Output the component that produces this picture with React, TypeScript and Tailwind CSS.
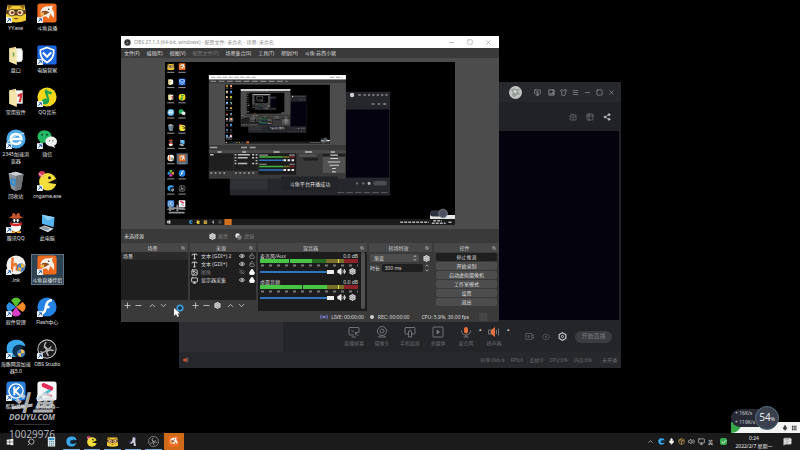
import type { ReactNode } from "react";
import { clsx } from "clsx";
import {
  Check, ChevronDown, ChevronUp, Eye, EyeOff, Image, Lock, Menu, Mic, Minus, Monitor, MonitorPlay,
  Plus, Search, Settings, Share2, Shirt, Square, Table2, Type, Unlock,
  Volume2, X, MessageSquareText, Package, Grip, CopyMinus,
} from "lucide-react";

/* Icon artwork, all on a 24x24 grid */
const art: Record<string, ReactNode> = {
  yy: (
    <>
      <path d="M2 2L8 3H16L22 2L24 12V21Q12 26 0 21V12Z" fill="#f4cd35" />
      <path d="M2 2L8 3L3 8ZM22 2L16 3L21 8Z" fill="#9a6a1c" />
      <path d="M0 9Q12 6 24 9V13Q12 17 0 13Z" fill="#5a3a18" />
      <circle cx="7" cy="11.5" r="4" fill="#f7e6b8" stroke="#5a3a18" />
      <circle cx="17" cy="11.5" r="4" fill="#f7e6b8" stroke="#5a3a18" />
      <circle cx="7.5" cy="11.5" r="1.800" fill="#7a3a22" />
      <circle cx="16.5" cy="11.5" r="1.800" fill="#7a3a22" />
      <path d="M9 18Q12 21 15 18Z" fill="#6b4218" />
    </>
  ),
  douyu: (
    <>
      <rect x="0.5" y="0.5" width="23" height="23" rx="3" fill="#ee6a1f" />
      <path d="M4 11Q6 3 15 4L19 3L18 7Q22 12 20 18L16 13L14 19L11 16L5 17L9 12Z" fill="#f6efe6" />
      <path d="M6 10Q11 8 15 11L10 14L6 15Z" fill="#8d4a1e" />
      <path d="M4 12L9 11L8 15L4 15Z" fill="#f7b34d" />
      <circle cx="14" cy="7.5" r="1" fill="#333" />
    </>
  ),
  folder: (
    <>
      <path d="M4 4L12 2V22L4 20Z" fill="#e9d58e" />
      <path d="M11 4H19V20H11Z" fill="#f7f6ee" />
      <path d="M4 4L13 7V24L4 20Z" fill="#f4e6aa" />
      <path d="M14 9L20 6V18L14 21Z" fill="#fff" />
      <rect x="8" y="9" width="2" height="5" fill="#7aa36b" />
    </>
  ),
  folderRed: (
    <>
      <path d="M4 4L12 2V22L4 20Z" fill="#e9d58e" />
      <path d="M11 4H20V20H11Z" fill="#f8f8f5" />
      <path d="M4 4L13 7V24L4 20Z" fill="#f4e6aa" />
      <path d="M14 9L20 7L18 18H15L17 11L14 12Z" fill="#d22f35" />
    </>
  ),
  guard: (
    <>
      <rect x="0.5" y="0.5" width="23" height="23" rx="2" fill="#1c66df" />
      <path d="M12 3L20 6Q21 16 12 21Q3 16 4 6Z" fill="none" stroke="#fff" strokeWidth="2" />
      <path d="M7 9L12 14L17 9" fill="none" stroke="#fff" strokeWidth="2.6" />
    </>
  ),
  qqmusic: (
    <>
      <circle cx="12" cy="12" r="11.5" fill="#f6d719" />
      <path d="M11 2Q12 5 18 6L17 9L13 8L15 16Q14 21 9 21Q5 20 6 16Q8 13 12 14L9 5Z" fill="#22a455" />
    </>
  ),
  ie: (
    <>
      <circle cx="12" cy="12" r="11.5" fill="#4aa9e6" />
      <path d="M5 12H18.5Q18 6 12 6Q6 6 5.500 12Q6 18 12 18Q16 18 18 15" fill="none" stroke="#fff" strokeWidth="3" />
      <path d="M1 17Q4 9 22 5" fill="none" stroke="#d6efff" strokeWidth="1.200" />
    </>
  ),
  wechat: (
    <>
      <ellipse cx="9" cy="9" rx="8.500" ry="7.500" fill="#25b764" />
      <path d="M4 14L3 19L8 16Z" fill="#25b764" />
      <ellipse cx="17" cy="15" rx="7" ry="6" fill="#eef0ee" />
      <path d="M20 19L22 23L17 20Z" fill="#eef0ee" />
      <circle cx="6" cy="7" r="1.200" fill="#0a4a25" />
      <circle cx="12" cy="7" r="1.200" fill="#0a4a25" />
      <circle cx="15" cy="14" r="0.900" fill="#777" />
      <circle cx="19" cy="14" r="0.900" fill="#777" />
    </>
  ),
  bin: (
    <>
      <path d="M3 3L12 1L21 4L18 22L11 24L6 21Z" fill="#8a9095" />
      <path d="M3 3L12 1L21 4L12 6Z" fill="#c9ced1" />
      <path d="M12 6L21 4L18 22L11 24Z" fill="#6e7478" />
      <path d="M7 10L11 11L10 17L6 15Z" fill="none" stroke="#2c8ed6" strokeWidth="2" />
    </>
  ),
  pac: (
    <>
      <circle cx="6" cy="4" r="4" fill="#d33a63" />
      <circle cx="13" cy="13" r="10.500" fill="#f4de3b" />
      <path d="M13 14L24 9V16Z" fill="#161206" />
      <circle cx="15" cy="8" r="1.800" fill="#222" />
      <path d="M2 3L8 7" stroke="#f4a1ba" strokeWidth="1.500" />
    </>
  ),
  qq: (
    <>
      <ellipse cx="12" cy="14" rx="7" ry="8" fill="#17181c" />
      <ellipse cx="12" cy="17" rx="6" ry="6" fill="#fff" />
      <circle cx="12" cy="7" r="5" fill="#17181c" />
      <path d="M3 5Q12 9 21 5L17 4L16 0H14L12 3L10 0H8L7 4Z" fill="#c4542c" />
      <path d="M5 11Q12 15 19 11V14Q12 18 5 14Z" fill="#d9262c" />
      <ellipse cx="10" cy="9" rx="1.300" ry="1.700" fill="#fff" />
      <ellipse cx="14" cy="9" rx="1.300" ry="1.700" fill="#fff" />
      <path d="M6 23H11M13 23H18" stroke="#f3a11e" strokeWidth="2" />
    </>
  ),
  pc: (
    <>
      <path d="M6 2L21 5L20 17L6 13Z" fill="#54b5ee" />
      <path d="M6 2L21 5L13 9Z" fill="#8dd0f6" />
      <path d="M2 18L9 15L20 19L13 23Z" fill="#cfd8de" />
      <path d="M4 18L9 16L16 19L12 21Z" fill="#8d9aa3" />
    </>
  ),
  link: (
    <>
      <circle cx="12" cy="12" r="11.500" fill="#f3f1ee" />
      <path d="M8 3L7 20M7 14Q12 8 13 13V19" fill="none" stroke="#e9742a" strokeWidth="3" />
      <circle cx="18" cy="15" r="5" fill="#4a7fc1" />
      <path d="M18 10L22 12V15H18ZM14 15H18V20L15 18Z" fill="#f0b840" />
    </>
  ),
  clover: (
    <>
      <path d="M12 12L6 4Q12 -3 18 4Z" fill="#57c12c" />
      <path d="M12 12L20 6Q27 12 20 18Z" fill="#f08b25" />
      <path d="M12 12L18 20Q12 27 6 20Z" fill="#d93ec5" />
      <path d="M12 12L4 18Q-3 12 4 6Z" fill="#2d8fe2" />
    </>
  ),
  flash: (
    <>
      <circle cx="12" cy="12" r="11.500" fill="#2583e4" />
      <path d="M18 4Q12 4 11 11Q10 18 6 20M9 12H15" fill="none" stroke="#fff" strokeWidth="3" />
    </>
  ),
  dolphin: (
    <>
      <path d="M1 14Q-1 3 11 1Q22 0 23 9L17 7Q9 7 8 14Q8 19 13 22Q3 22 1 14Z" fill="#38a8ea" />
      <path d="M8 14Q9 7 17 7L22 11Q15 10 13 15Q12 19 15 22Q8 20 8 14Z" fill="#0d3457" />
      <circle cx="18" cy="17" r="5" fill="#3e78bd" />
      <path d="M18 12L22 14V17H18ZM14 17H18V22L15 20Z" fill="#f1bf49" />
    </>
  ),
  dolphinSmall: (
    <>
      <path d="M1 14Q-1 3 11 1Q22 0 23 9L17 8Q9 8 9 14Q10 18 16 17L23 15Q19 24 10 23Q2 21 1 14Z" fill="#38a8ea" />
      <path d="M9 14Q9 8 17 8L22 10Q14 10 13 16Q9 17 9 14Z" fill="#0d3457" />
    </>
  ),
  obs: (
    <>
      <circle cx="12" cy="12" r="11" fill="#1b1b1d" stroke="#b8b8b8" strokeWidth="1.300" />
      <path d="M11 4Q7 8 11 12Q15 13 17 9M20 14Q15 12 12 15Q11 18 14 20M4 15Q8 18 12 13Q12 10 8 9" fill="none" stroke="#b8b8b8" strokeWidth="1.600" />
    </>
  ),
  kugou: (
    <>
      <rect x="0.500" y="0.500" width="23" height="23" rx="4" fill="#2b7fdc" />
      <circle cx="12" cy="12" r="8.500" fill="none" stroke="#fff" strokeWidth="1.600" />
      <path d="M10 7V17M16 7L11 12L16 17" fill="none" stroke="#fff" strokeWidth="2.400" />
    </>
  ),
  clip: (
    <>
      <rect x="0.500" y="0.500" width="23" height="23" rx="3" fill="#f7f7f8" />
      <path d="M8 5L17 9" stroke="#e32b55" strokeWidth="5" strokeLinecap="round" />
      <path d="M16 11L8 16" stroke="#49b7c9" strokeWidth="3" />
      <path d="M12 16L18 18" stroke="#e32b55" strokeWidth="2.500" />
    </>
  ),
  calc: (
    <>
      <rect x="4" y="2" width="16" height="21" fill="#dfe6ea" />
      <rect x="6" y="4" width="12" height="5" fill="#2f8fc4" />
      <path d="M7 12H17M7 16H17M7 20H17" stroke="#3a7690" strokeWidth="2" strokeDasharray="2.500 1.500" />
    </>
  ),
  figure: (
    <>
      <path d="M13 2L19 4L18 13L20 21L15 22L14 14L9 17L5 16L11 11Z" fill="#cfcbd8" />
      <path d="M3 12L9 10L8 15ZM15 1L20 1L19 7Z" fill="#342e63" />
    </>
  ),
  windows: <path d="M2 5L11 3.500V11.500H2ZM12.500 3.300L22 2V11.500H12.500ZM2 13H11V20.500L2 19.300ZM12.500 13H22V22L12.500 20.700Z" fill="#f1f1f1" />,
};

const shortcutMark = (
  <>
    <rect x="0" y="17" width="7" height="7" fill="#eef3f8" />
    <path d="M1.500 22.500L5 19M2.500 19H5.200V21.700" fill="none" stroke="#2b5fa8" strokeWidth="1.200" />
  </>
);

type DesktopItem = { icon: string; label: string; shortcut?: boolean; selected?: boolean };

const desktopItems: DesktopItem[] = [
  { icon: "yy", label: "YY.exe", shortcut: true },
  { icon: "douyu", label: "斗鱼直播", shortcut: true },
  { icon: "folder", label: "盘口" },
  { icon: "guard", label: "电脑管家", shortcut: true },
  { icon: "folderRed", label: "常用软件" },
  { icon: "qqmusic", label: "QQ音乐", shortcut: true },
  { icon: "ie", label: "2345加速浏\n览器", shortcut: true },
  { icon: "wechat", label: "微信", shortcut: true },
  { icon: "bin", label: "回收站" },
  { icon: "pac", label: "cngame.exe", shortcut: true },
  { icon: "qq", label: "腾讯QQ", shortcut: true },
  { icon: "pc", label: "此电脑" },
  { icon: "link", label: ".lnk", shortcut: true },
  { icon: "douyu", label: "斗鱼直播伴侣", shortcut: true, selected: true },
  { icon: "clover", label: "软件管理", shortcut: true },
  { icon: "flash", label: "Flash中心", shortcut: true },
  { icon: "dolphin", label: "海豚网游加速\n器5.0", shortcut: true },
  { icon: "obs", label: "OBS Studio", shortcut: true },
  { icon: "kugou", label: "酷狗音乐", shortcut: true },
  { icon: "clip", label: "必剪直播…", shortcut: true },
];

const taskbarApps = ["dolphinSmall", "pac", "yy", "figure", "obs"];

function Art({ name, className, shortcut }: { name: string; className?: string; shortcut?: boolean }) {
  return (
    <svg viewBox="0 0 24 24" className={className} aria-hidden="true">
      {art[name]}
      {shortcut && shortcutMark}
    </svg>
  );
}

/* Captured desktop inside the OBS preview: it contains itself, down to `depth` levels */
function CapturedScreen({ depth }: { depth: number }) {
  return (
    <>
      <rect width="800" height="450" fill="#000" />
      {desktopItems.map((item, i) => {
        const x = i % 2 === 0 ? 6 : 37;
        const y = 3 + Math.floor(i / 2) * 42;
        return (
          <g key={i}>
            {item.selected && <rect x={x - 5} y={y - 3} width="31" height="30" fill="#53677a" />}
            <svg x={x} y={y} width="20" height="20" viewBox="0 0 24 24">
              {art[item.icon]}
            </svg>
            <rect x={x} y={y + 24} width="20" height="3" fill="#8c8c8c" />
          </g>
        );
      })}
      <path d="M10 403H54M14 394V412M34 394V412" stroke="#8b8f94" strokeWidth="5" />
      <rect x="10" y="413" width="44" height="5" fill="#8b8f94" />

      {/* Companion window */}
      <rect x="179" y="82" width="442" height="286" fill="#26272c" />
      <rect x="283" y="131" width="336" height="188" fill="#03020e" />
      <rect x="179" y="320" width="104" height="32" fill="#303136" />
      <circle cx="516" cy="91" r="6" fill="#cfcfcf" />
      <path d="M533 91H540M548 91H554M560 91H566M572 91H578M584 91H590M596 91H602M608 91H614M570 116H578M587 116H593M602 116H610" stroke="#8c8c90" strokeWidth="4" />
      <path d="M476 360H618" stroke="#55565b" strokeWidth="3" strokeDasharray="18 6" />
      <rect x="575" y="328" width="37" height="13" rx="6" fill="#4b4c52" />
      <circle cx="563" cy="335" r="4" fill="#bbb" />
      <circle cx="547" cy="335" r="3" fill="#707176" />
      <circle cx="530" cy="335" r="3" fill="#707176" />

      {/* OBS window */}
      <rect x="121" y="36" width="378" height="286" fill="#393939" />
      <rect x="121" y="36" width="378" height="12" fill="#fff" />
      <path d="M127 42H250M455 42H490" stroke="#a5a5a5" strokeWidth="3" strokeDasharray="12 4" />
      <path d="M125 53H338" stroke="#9a9a9a" strokeWidth="3" strokeDasharray="16 7" />
      <rect x="121" y="58" width="378" height="171" fill="#4c4c4c" />
      {depth > 0 ? (
        <svg x="165" y="62" width="290" height="163" viewBox="0 0 800 450">
          <CapturedScreen depth={depth - 1} />
        </svg>
      ) : (
        <rect x="165" y="62" width="290" height="163" fill="#0a0a0a" />
      )}
      <path d="M124 236H144M210 236H226M234 236H250" stroke="#a5a5a5" strokeWidth="4" />
      <rect x="121" y="243" width="378" height="9" fill="#4a4a4a" />
      <path d="M145 248H156M213 248H224M300 248H316M386 248H406M457 248H469" stroke="#bbb" strokeWidth="4" />
      <rect x="121" y="252" width="67" height="48" fill="#1f1f1f" />
      <rect x="190" y="252" width="66" height="48" fill="#1f1f1f" />
      <rect x="258" y="252" width="104" height="59" fill="#1b1b1b" />
      <path d="M124 256H134M192 256H197M201 256H234M192 264H197M201 264H228M192 272H197M192 280H197M201 280H227M240 256H246M250 256H255M240 264H246M250 264H255M250 272H255M240 280H246M250 280H255" stroke="#bcbcbc" strokeWidth="4" />
      <path d="M125 306H166M193 306H246" stroke="#a5a5a5" strokeWidth="4" strokeDasharray="5 7" />
      <path d="M260 257H284M260 282H280M343 257H358M343 282H358" stroke="#999" strokeWidth="3" />
      <path d="M260 262H325M260 288H327" stroke="#41b63c" strokeWidth="4" />
      <path d="M325 262H344M327 288H344" stroke="#77712c" strokeWidth="4" />
      <path d="M344 262H358M344 288H358" stroke="#7e2328" strokeWidth="4" />
      <path d="M260 271H327M260 298H327" stroke="#2f72c4" strokeWidth="4" />
      <path d="M327 271H357M327 298H357" stroke="#ececec" strokeWidth="6" strokeDasharray="7 4" />
      <rect x="370" y="254" width="48" height="8" fill="#505050" />
      <rect x="382" y="264" width="40" height="8" fill="#202020" />
      <rect x="435" y="253" width="62" height="53" fill="#525252" />
      <rect x="435" y="253" width="62" height="8" fill="#1f1f1f" />
      <path d="M456 257H477M456 266H477M449 276H483M454 285H480M461 294H471M461 303H471" stroke="#d0d0d0" strokeWidth="3" />

      {/* Broadcast notice */}
      <rect x="320" y="316" width="156" height="38" rx="2" fill="#232428" />
      <text x="344" y="342" fill="#e2e2e2" fontSize="14" fontFamily="'Noto Sans CJK SC', sans-serif">
        斗鱼平台开播成功
      </text>

      {/* Taskbar and floating widgets */}
      <rect y="433" width="800" height="17" fill="#1b1b1c" />
      <rect x="164" y="433" width="20" height="17" fill="#d4701d" />
      {taskbarApps.map((name, i) => (
        <svg key={name} x={66 + i * 20} y="436" width="11" height="11" viewBox="0 0 24 24">
          {art[name]}
        </svg>
      ))}
      <svg x="5" y="436" width="11" height="11" viewBox="0 0 24 24">{art.windows}</svg>
      <path d="M649 442H728M740 438H764M736 445H774M782 442H792" stroke="#b5b5b5" strokeWidth="4" strokeDasharray="8 3" />
      <rect x="731" y="422" width="69" height="11" fill="#e6e6e6" />
      <rect x="731" y="409" width="44" height="17" rx="8" fill="#2e323e" />
      <circle cx="767" cy="418" r="12" fill="#4b5060" stroke="#8a919e" strokeWidth="2" />
    </>
  );
}

function DesktopIcons() {
  return (
    <main className="grid w-[63px] grid-cols-2">
      {desktopItems.map((item) => (
        <button
          key={item.label}
          className="flex h-[42px] flex-col items-center pt-[3px] text-[5px] leading-[7px] whitespace-pre text-[#e4e4e4]"
        >
          <span
            className={clsx(
              "flex w-full flex-col items-center",
              item.selected && "bg-[#2f4252] outline outline-[#5b7184]",
            )}
          >
            <Art name={item.icon} shortcut={item.shortcut} className="h-5 w-5" />
            <span className="pt-[2px]">{item.label}</span>
          </span>
        </button>
      ))}
    </main>
  );
}

/* Line icons of the companion window */
function LineIcon({ className, children }: { className?: string; children: ReactNode }) {
  return (
    <svg viewBox="0 0 24 24" className={className} fill="none" stroke="currentColor" strokeWidth="1.800" aria-hidden="true">
      {children}
    </svg>
  );
}

const companionTools = [
  {
    label: "直播屏幕",
    drawing: <path d="M12 18H4Q2 18 2 16V5Q2 3 4 3H20Q22 3 22 5V14M7 8L10 11L8 13M14 13L21 20M15 18V13H20M7 22H16" />,
  },
  {
    label: "摄像头",
    drawing: (
      <>
        <circle cx="12" cy="10" r="9" />
        <circle cx="12" cy="10" r="4" />
        <path d="M8 19L5 22H19L16 19" />
      </>
    ),
  },
  {
    label: "手机投屏",
    drawing: <path d="M8 16H3Q2 16 2 15V4Q2 3 3 3H21Q22 3 22 4V15Q22 16 21 16H16M9 10H15V22H9ZM11 6H13" />,
  },
  {
    label: "多媒体",
    drawing: (
      <>
        <rect x="2" y="2" width="20" height="20" rx="1" />
        <path d="M10 8L15 12L10 16Z" fill="currentColor" />
      </>
    ),
  },
];

function CompanionWindow() {
  return (
    <section className="absolute top-[82px] left-[179px] flex h-[286px] w-[442px] flex-col bg-[#242529] text-[5px] leading-[7px] text-[#68696e]">
      <header className="flex h-5 items-center justify-end gap-[5px] bg-[#27282c] pr-[6px] text-[#a5a6aa]">
        <svg viewBox="0 0 24 24" className="mr-[7px] h-[13px] w-[13px]" aria-hidden="true">
          <circle cx="12" cy="12" r="12" fill="#c4c4c2" />
          <path d="M3 7Q9 2 14 6L20 5L17 11L21 15L14 17L10 21L5 17L7 12Z" fill="#98a09c" />
          <path d="M8 8L14 9L12 14Z" fill="#eee" />
        </svg>
        <button aria-label="直播" className="mr-[2px]"><MonitorPlay className="h-[7px] w-[7px]" /></button>
        <button aria-label="消息">
          <LineIcon className="h-[7px] w-[7px]">
            <path d="M3 3H21V21H3ZM7 16H21M17 3V16" strokeWidth="2.500" />
          </LineIcon>
        </button>
        <button aria-label="皮肤"><Shirt className="h-[7px] w-[7px]" /></button>
        <button aria-label="菜单"><Menu className="h-[7px] w-[7px]" /></button>
        <button aria-label="最小化"><Minus className="h-[7px] w-[7px]" /></button>
        <button aria-label="最大化"><Square className="h-[7px] w-[7px]" /></button>
        <button aria-label="关闭"><X className="h-[7px] w-[7px]" /></button>
      </header>
      <div className="flex h-[29px] items-center justify-end gap-[9px] bg-[#212226] pr-[10px] text-[#77787c]">
        <button aria-label="礼物">
          <LineIcon className="h-2 w-2">
            <path d="M3 6H21V21H3ZM3 12H21M12 12V21M8 2L12 6L16 2" />
          </LineIcon>
        </button>
        <button aria-label="面板"><Table2 className="h-2 w-2" /></button>
        <button aria-label="分享" className="text-[#b9babd]"><Share2 className="h-2 w-2 fill-current" /></button>
      </div>
      <div className="flex grow">
        <aside className="w-[104px] bg-[#2e2e32]" />
        <div className="flex grow flex-col pr-[2px]">
          <div className="h-[189px] bg-[#03020d]" />
          <div className="flex h-8 items-center pt-px">
            <div className="ml-[61px] flex gap-[8px]">
              {companionTools.map(({ label, drawing }) => (
                <button key={label} className="flex w-5 flex-col items-center gap-[2px] whitespace-nowrap">
                  <LineIcon className="h-3 w-3 text-[#7b7c80]">{drawing}</LineIcon>
                  {label}
                </button>
              ))}
              <button className="relative flex w-5 flex-col items-center gap-[2px]">
                <LineIcon className="h-3 w-3 text-[#7b7c80]">
                  <rect x="8" y="2" width="8" height="13" rx="4" fill="#e2703d" stroke="none" />
                  <path d="M3 9Q3 18 12 18Q21 18 21 9M12 18V22M7 22H17" />
                </LineIcon>
                麦克风
                <span className="absolute top-0 -right-[6px] text-[#bbb]">▴</span>
              </button>
              <button className="relative flex w-5 flex-col items-center gap-[2px]">
                <LineIcon className="h-3 w-3 text-[#7b7c80]">
                  <path d="M1 8H6V16H1Z" />
                  <path d="M6 8L14 2V22L6 16Z" fill="#e2703d" stroke="none" />
                  <path d="M17 8V16M21 5V19" />
                </LineIcon>
                扬声器
                <span className="absolute top-0 -right-[6px] text-[#bbb]">▴</span>
              </button>
            </div>
            <div className="ml-auto flex items-center gap-[8px] pr-[7px]">
              <button aria-label="录制">
                <LineIcon className="h-[9px] w-[9px]">
                  <path d="M2 4H18V20H2ZM8 9L13 12L8 15ZM18 10L23 7V17L18 14" />
                </LineIcon>
              </button>
              <button aria-label="预览">
                <LineIcon className="h-2 w-2">
                  <path d="M1 12L7 4H17L23 12L17 20H7Z" />
                  <circle cx="12" cy="12" r="2.500" />
                </LineIcon>
              </button>
              <button aria-label="设置" className="text-[#c9cacc]">
                <LineIcon className="h-[9px] w-[9px]">
                  <path d="M12 2L21 7V17L12 22L3 17V7Z" strokeWidth="3" />
                  <circle cx="12" cy="12" r="3" strokeWidth="2.500" />
                </LineIcon>
              </button>
              <button className="h-3 w-[37px] rounded-full bg-[#3b3c41] text-[6px] text-[#77787d]">开始直播</button>
            </div>
          </div>
        </div>
      </div>
      <footer className="flex h-4 items-center gap-[6px] bg-[#27282c] px-[4px]">
        <svg viewBox="0 0 24 24" className="mr-auto h-[6px] w-[6px]" aria-hidden="true">
          <path d="M1 8H6L14 2V22L6 16H1Z" fill="#d9562d" />
          <path d="M18 5Q22 12 18 19" fill="none" stroke="#8d8d8d" strokeWidth="3" />
        </svg>
        <span>码率:0kb/s</span>
        <span>FPS:0</span>
        <span>丢帧:0</span>
        <span>CPU:0%</span>
        <span>内存:0%</span>
        <span className="ml-1">未开播</span>
      </footer>
    </section>
  );
}

function DockTitle({ children }: { children: ReactNode }) {
  return (
    <h2 className="flex h-[9px] items-center bg-[#474747] px-[3px] text-[#d0d0d0]">
      <span className="grow text-center">{children}</span>
      <CopyMinus className="h-1 w-1" />
    </h2>
  );
}

const toolIcon = "h-[9px] w-[9px]";

const sources = [
  { icon: Type, label: "文本 (GDI+) 2", visible: true, locked: false },
  { icon: Type, label: "文本 (GDI+)", visible: true, locked: false },
  { icon: Image, label: "图像", visible: false, locked: true },
  { icon: Monitor, label: "显示器采集", visible: true, locked: true },
];

function MixerStrip({ label, level, marker }: { label: string; level: number; marker: number }) {
  return (
    <div className="flex h-[26px] flex-col pt-px">
      <div className="flex justify-between leading-[6px]">
        <span>{label}</span>
        <span>0.0 dB</span>
      </div>
      <svg viewBox="0 0 98 8" className="w-full" aria-hidden="true">
        <rect width="66" height="4" fill="#226c22" />
        <rect x="66" width="18" height="4" fill="#77702a" />
        <rect x="84" width="14" height="4" fill="#8b2329" />
        <rect width={level} height="4" fill="#47c545" />
        <rect x={marker} width="1" height="4" fill="#0f2a10" />
        <rect x="78" width="1" height="4" fill="#e6e03c" />
        <path d="M1 6.500H98" stroke="#777" strokeWidth="2" strokeDasharray="3 5" />
      </svg>
      <div className="flex h-[9px] items-center gap-[3px]">
        <input
          type="range"
          defaultValue={100}
          aria-label={label}
          className="h-[2px] w-[74px] appearance-none bg-[#3174c4] [&::-webkit-slider-thumb]:h-[4px] [&::-webkit-slider-thumb]:w-[7px] [&::-webkit-slider-thumb]:appearance-none [&::-webkit-slider-thumb]:bg-[#ececec]"
        />
        <button aria-label="静音"><Volume2 className="h-[9px] w-[9px] fill-[#eee] text-[#eee]" /></button>
        <button aria-label="音频设置"><Settings strokeWidth={4} className="h-[7px] w-[7px]" /></button>
      </div>
    </div>
  );
}

const menus = ["文件(F)", "编辑(E)", "视图(V)", "配置文件(P)", "场景集合(S)", "工具(T)", "帮助(H)", "斗鱼·苏西小猪"];
const controls = ["停止推流", "开始录制", "启动虚拟摄像机", "工作室模式", "设置", "退出"];

function ObsWindow() {
  return (
    <section className="absolute top-9 left-[121px] flex w-[378px] flex-col bg-[#3a3a3a] text-[5px] leading-[8px] text-[#dcdcdc]">
      <header className="flex h-3 items-center bg-white px-[3px] text-[#8f8f8f]">
        <Art name="obs" className="mr-[3px] h-[7px] w-[7px]" />
        <h1 className="grow">OBS 27.1.3 (64-bit, windows) - 配置文件: 未命名 - 场景: 未命名</h1>
        <div className="flex gap-3 pr-[4px]">
          <button aria-label="最小化"><Minus className="h-[7px] w-[7px]" /></button>
          <button aria-label="最大化"><Square className="h-[6px] w-[6px]" /></button>
          <button aria-label="关闭"><X className="h-[7px] w-[7px]" /></button>
        </div>
      </header>
      <nav className="flex h-[10px] items-center gap-[7px] px-[3px]">
        {menus.map((menu) => (
          <button key={menu} className={menu === "配置文件(P)" ? "text-[#777]" : undefined}>{menu}</button>
        ))}
      </nav>

      <div className="bg-[#4c4c4c] px-11 py-1">
        <svg viewBox="0 0 800 450" className="w-full" role="img" aria-label="预览">
          <CapturedScreen depth={3} />
        </svg>
      </div>

      <div className="flex h-[14px] items-center gap-[7px] px-[3px]">
        <span className="w-[78px]">未选择源</span>
        <button className="flex items-center gap-[2px] text-[#808080]">
          <Settings strokeWidth={4} className="h-[7px] w-[7px] text-[#e5e5e5]" />属性
        </button>
        <button className="flex items-center gap-[2px] text-[#808080]">
          <svg viewBox="0 0 24 24" className="h-[7px] w-[7px]" aria-hidden="true">
            <circle cx="9" cy="9" r="8" fill="#e5e5e5" />
            <circle cx="15" cy="15" r="8" fill="#7d7d7d" />
          </svg>
          滤镜
        </button>
      </div>

      <div className="grid h-[68px] grid-cols-[67px_66px_109px_63px_1fr] gap-x-[2px]">
        <section>
          <DockTitle>场景</DockTitle>
          <div className="h-12 bg-[#1f1f1f]">
            <button className="block w-full bg-[#2b2b2b] px-[2px] text-left">场景</button>
          </div>
          <div className="flex h-[11px] items-center gap-[2px] px-[2px]">
            <button aria-label="添加场景"><Plus className={toolIcon} /></button>
            <button aria-label="删除场景"><Minus className={toolIcon} /></button>
            <button aria-label="场景上移" className="ml-[3px]"><ChevronUp className={toolIcon} /></button>
            <button aria-label="场景下移"><ChevronDown className={toolIcon} /></button>
          </div>
        </section>

        <section>
          <DockTitle>来源</DockTitle>
          <ul className="h-12 bg-[#1f1f1f] px-px">
            {sources.map(({ icon: Icon, label, visible, locked }) => (
              <li key={label} className="flex h-2 items-center">
                <Icon strokeWidth={3} className="mr-[3px] h-[7px] w-[7px]" />
                <span className={clsx("grow whitespace-nowrap", !visible && "text-[#777]")}>{label}</span>
                <button aria-label="显示" className="mr-[4px]">
                  {visible ? <Eye strokeWidth={3} className="h-[6px] w-[6px]" /> : <EyeOff className="h-[6px] w-[6px] text-[#888]" />}
                </button>
                <button aria-label="锁定">
                  {locked ? (
                    <Lock strokeWidth={3} className="h-[6px] w-[6px] fill-white text-white" />
                  ) : (
                    <Unlock strokeWidth={3} className="h-[6px] w-[6px] text-[#8a8a8a]" />
                  )}
                </button>
              </li>
            ))}
          </ul>
          <div className="flex h-[11px] items-center gap-[2px] px-px">
            <button aria-label="添加来源"><Plus className={toolIcon} /></button>
            <button aria-label="删除来源"><Minus className={toolIcon} /></button>
            <button aria-label="来源属性" className="ml-px"><Settings strokeWidth={4} className="h-[7px] w-[7px]" /></button>
            <button aria-label="来源上移" className="ml-[3px]"><ChevronUp className={toolIcon} /></button>
            <button aria-label="来源下移"><ChevronDown className={toolIcon} /></button>
          </div>
        </section>

        <section>
          <DockTitle>混音器</DockTitle>
          <div className="flex h-[59px] bg-[#1c1c1c]">
            <div className="w-[103px] pr-[3px] pl-[2px]">
              <MixerStrip label="麦克风/Aux" level={52} marker={29} />
              <MixerStrip label="桌面音频" level={67} marker={42} />
            </div>
            <div className="h-[57px] w-1 rounded-full bg-[#505050]" />
          </div>
        </section>

        <section>
          <DockTitle>转场特效</DockTitle>
          <div className="flex flex-col gap-[2px] px-px pt-[2px]">
            <div className="flex h-2 items-center justify-between">
              <div className="relative w-[49px]">
                <select aria-label="转场特效" className="block h-2 w-full appearance-none rounded-xs bg-[#4d4d4d] pl-[4px] leading-[8px]">
                  <option>渐变</option>
                </select>
                <svg viewBox="0 0 6 10" className="pointer-events-none absolute top-[1px] right-[2px] h-[6px] w-1" aria-hidden="true">
                  <path d="M1 3.500L3 1L5 3.500M1 6.500L3 9L5 6.500" fill="none" stroke="#ccc" strokeWidth="1.200" />
                </svg>
              </div>
              <button aria-label="转场设置" className="mr-px"><Settings strokeWidth={4} className="h-[7px] w-[7px]" /></button>
            </div>
            <div className="flex h-2 items-center justify-between">
              <label htmlFor="duration">时长</label>
              <input id="duration" defaultValue="300 ms" className="h-2 w-[41px] rounded-xs bg-[#1f1f1f] pl-[3px]" />
              <div className="mr-px flex w-[6px] flex-col items-center">
                <button aria-label="增加"><ChevronUp strokeWidth={3} className="h-[5px] w-[6px]" /></button>
                <button aria-label="减少"><ChevronDown strokeWidth={3} className="h-[5px] w-[6px]" /></button>
              </div>
            </div>
          </div>
        </section>

        <section>
          <DockTitle>控件</DockTitle>
          <div className="flex flex-col gap-px px-[2px] pt-px">
            {controls.map((label, i) => (
              <button key={label} className={clsx("h-2 rounded-xs", i === 0 ? "bg-[#1f1f1f]" : "bg-[#4d4d4d]")}>{label}</button>
            ))}
          </div>
        </section>
      </div>

      <footer className="flex h-[11px] items-center justify-end pr-[12px]">
        <svg viewBox="0 0 24 16" className="mr-[3px] h-[6px] w-2" aria-hidden="true">
          <circle cx="12" cy="8" r="3.500" fill="#8084e0" />
          <path d="M7 3Q4 8 7 13M17 3Q20 8 17 13M3 1Q-1 8 3 15M21 1Q25 8 21 15" fill="none" stroke="#8084e0" strokeWidth="2" />
        </svg>
        <span>LIVE: 00:00:00</span>
        <span className="mr-[4px] ml-[6px] h-1 w-1 rounded-full bg-[#d0d0d0]" />
        <span>REC: 00:00:00</span>
        <span className="ml-3">CPU: 5.9%, 30.00 fps</span>
        <span className="ml-[10px] h-2 w-2 bg-[#464646]" />
      </footer>
    </section>
  );
}

function Taskbar() {
  return (
    <footer className="flex h-[17px] items-center bg-[#1b1b1c] text-[5px] leading-[8px] text-[#e8e8e8]">
      <div className="grid h-full w-[184px] grid-cols-9">
        <button aria-label="开始" className="grid place-items-center"><Art name="windows" className="h-2 w-2" /></button>
        <button aria-label="搜索" className="grid place-items-center"><Search className="h-2 w-2 -scale-x-100" /></button>
        <button aria-label="计算器" className="grid place-items-center"><Art name="calc" className="h-[11px] w-[11px]" /></button>
        {taskbarApps.map((name) => (
          <button key={name} aria-label={name} className="mx-[2px] grid place-items-center border-b border-[#78aee0]">
            <Art name={name} className="h-[11px] w-[11px]" />
          </button>
        ))}
        <button aria-label="斗鱼直播伴侣" className="grid place-items-center bg-[#cf6a1b]">
          <Art name="douyu" className="h-[11px] w-[11px]" />
        </button>
      </div>
      <div className="ml-auto flex items-center gap-[3px]">
        <ChevronUp className="mr-px h-[7px] w-[7px]" />
        <Art name="dolphinSmall" className="h-[7px] w-[7px]" />
        <Mic className="h-[7px] w-[7px] fill-white" />
        <Package className="h-[7px] w-[7px] text-[#dcb45c]" />
        <Volume2 className="h-[7px] w-[7px]" />
        <Monitor className="h-[7px] w-[7px]" />
        <span>英</span>
        <span className="ml-[4px] grid h-[7px] w-[7px] place-items-center rounded-xs bg-[#38ad4e]"><Check strokeWidth={4} className="h-[6px] w-[6px]" /></span>
      </div>
      <time className="w-[54px] text-center">
        0:24
        <br />
        2022/2/7 星期一
      </time>
      <button aria-label="通知" className="mr-2 ml-[2px]"><MessageSquareText className="h-[9px] w-[9px] fill-[#eee] text-[#999]" /></button>
    </footer>
  );
}

function SpeedWidget() {
  return (
    <>
      <div className="absolute right-0 bottom-[17px] flex h-[11px] w-[69px] items-center justify-end gap-[3px] bg-[#f3f3f3] pr-[3px] text-[#333]">
        <span className="mr-auto h-full w-[11px] rounded-br-full bg-[#36a94b]" />
        <Mic className="h-[6px] w-[6px] fill-[#333]" />
        <Grip strokeWidth={3} className="h-[6px] w-[6px]" />
      </div>
      <div className="absolute right-[21px] bottom-5 flex h-6 w-12 items-center">
        <div className="flex h-[18px] grow flex-col justify-center rounded-full bg-[#272a35] pl-1 text-[5px] leading-[9px] text-[#cdd0d8]">
          <span>+ 16K/s</span>
          <span>+ 119K/s</span>
        </div>
        <div className="absolute right-0 grid h-6 w-6 place-items-center rounded-full border border-[#55707e] bg-[#3b404e] text-[#e8eaf0]">
          <span className="text-[10px] leading-3">54<small className="text-[5px]">%</small></span>
        </div>
      </div>
    </>
  );
}

export default function App() {
  return (
    <div className="relative flex h-screen flex-col overflow-hidden bg-black font-['Noto_Sans','Noto_Sans_CJK_SC',sans-serif]">
      <div className="min-h-0 grow">
        <DesktopIcons />
      </div>
      <Taskbar />

      <CompanionWindow />
      <ObsWindow />

      {/* Busy cursor */}
      <svg viewBox="0 0 14 14" className="absolute top-[303px] left-[172px] h-[14px] w-[14px]" aria-hidden="true">
        <circle cx="8" cy="5" r="2.800" fill="#17384f" stroke="#3fa2dd" strokeWidth="1.500" />
        <path d="M2 5V13L4 11L5.500 14L7 13L5.500 10.500H8Z" fill="#fff" />
      </svg>

      <SpeedWidget />

      {/* Stream watermark */}
      <div className="pointer-events-none absolute bottom-[10px] left-2 flex w-12 flex-col items-center text-[#d9dde0]/80">
        <strong className="text-[22px] leading-5 font-black italic">斗鱼</strong>
        <strong className="text-[8px] leading-[9px] font-bold italic">DOUYU.COM</strong>
        <span className="my-[3px] h-px w-9 bg-white/20" />
        <span className="text-[10px] leading-3">10029976</span>
      </div>
    </div>
  );
}
